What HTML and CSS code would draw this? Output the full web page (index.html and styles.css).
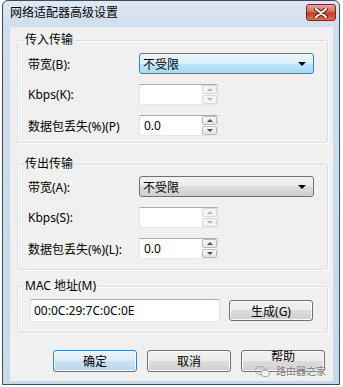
FILE: index.html
```html
<!DOCTYPE html>
<html lang="zh-CN">
<head>
    <meta charset="UTF-8" />
    <title>网络适配器高级设置</title>
    <link rel="stylesheet" href="styles.css">
</head>
<body>
    <div class="window">
        <div class="titlebar">
            <span class="title">网络适配器高级设置</span>
            <button class="close">
                <svg width="14" height="10" viewBox="0 0 14 10">
                    <path d="M2 1 L12 9 M12 1 L2 9" stroke="#5a1d14" stroke-width="4" stroke-linecap="round"/>
                    <path d="M2 1 L12 9 M12 1 L2 9" stroke="#ffffff" stroke-width="2.2" stroke-linecap="round"/>
                </svg>
            </button>
        </div>

        <div class="client">
            <fieldset class="group group-in">
                <legend>传入传输</legend>
                <div class="row">
                    <label>带宽(B):</label>
                    <div class="combo combo-hot"><span>不受限</span><i class="arrow"></i></div>
                </div>
                <div class="row">
                    <label>Kbps(K):</label>
                    <div class="spin spin-off">
                        <div class="spin-text"></div>
                        <div class="spin-btns"><span class="up"></span><span class="down"></span></div>
                    </div>
                </div>
                <div class="row">
                    <label>数据包丢失(%)(P)</label>
                    <div class="spin">
                        <div class="spin-text">0.0</div>
                        <div class="spin-btns"><span class="up"></span><span class="down"></span></div>
                    </div>
                </div>
            </fieldset>

            <fieldset class="group group-out">
                <legend>传出传输</legend>
                <div class="row">
                    <label>带宽(A):</label>
                    <div class="combo"><span>不受限</span><i class="arrow"></i></div>
                </div>
                <div class="row">
                    <label>Kbps(S):</label>
                    <div class="spin spin-off">
                        <div class="spin-text"></div>
                        <div class="spin-btns"><span class="up"></span><span class="down"></span></div>
                    </div>
                </div>
                <div class="row">
                    <label>数据包丢失(%)(L):</label>
                    <div class="spin">
                        <div class="spin-text">0.0</div>
                        <div class="spin-btns"><span class="up"></span><span class="down"></span></div>
                    </div>
                </div>
            </fieldset>

            <fieldset class="group group-mac">
                <legend>MAC 地址(M)</legend>
                <div class="mac-row">
                    <div class="mac-input">00:0C:29:7C:0C:0E</div>
                    <button class="btn">生成(G)</button>
                </div>
            </fieldset>

            <div class="actions">
                <button class="btn btn-default">确定</button>
                <button class="btn">取消</button>
                <button class="btn btn-help">帮助</button>
                <div class="watermark">
                    <svg width="15" height="13" viewBox="0 0 16 14">
                        <ellipse cx="6" cy="6" rx="5.5" ry="4.5" fill="none" stroke="#9a9a9a" stroke-width="1"/>
                        <ellipse cx="11" cy="9" rx="4.5" ry="3.6" fill="#f4f4f4" stroke="#9a9a9a" stroke-width="1"/>
                    </svg>
                    <span>路由器之家</span>
                </div>
            </div>
        </div>
    </div>
</body>
</html>
```

FILE: styles.css
```css
body {
    margin: 0;
    background-color: #ffffff;
    font-family: "Noto Sans", "Noto Sans CJK SC", sans-serif;
    font-size: 12px;
    color: #000000;
}
.window {
    margin-left: 2px;
    width: 338px;
    height: 385px;
    box-sizing: border-box;
    border: 1px solid #3e4b5b;
    border-radius: 6px 6px 0 0;
    background: linear-gradient(#dfe8f2, #d0dded 26px, #c9d9eb);
    padding: 0 6px 3px 7px;
    display: flex;
    flex-direction: column;
}
.titlebar {
    height: 26px;
    display: flex;
    justify-content: space-between;
    align-items: flex-start;
}
.title {
    margin-top: 4px;
    line-height: 16px;
    color: #000000;
}
.close {
    margin: 3px -3px 0 0;
    width: 30px;
    height: 17px;
    padding: 0;
    border: 1px solid #6b2b22;
    border-radius: 3px;
    background: linear-gradient(#eaa79b, #d8644f 48%, #c53b22 52%, #d4705a);
    display: flex;
    align-items: center;
    justify-content: center;
}
.client {
    flex: 1;
    background-color: #f0f0f0;
    padding: 5px 5px 0 7px;
    display: flex;
    flex-direction: column;
}
.group {
    margin: 0;
    padding: 5px 0 0 6px;
    border: 1px solid #d8e0e6;
    border-radius: 3px;
    box-shadow: inset 1px 1px 0 #ffffff, 1px 1px 0 #ffffff;
    min-width: 0;
}
.group legend {
    padding: 0 1px;
    line-height: 16px;
}
.group-in {
    padding-bottom: 6px;
}
.group-out {
    margin-top: 13px;
    padding-top: 4px;
    padding-bottom: 10px;
}
.group-mac {
    margin-top: 8px;
    padding-bottom: 10px;
}
.row {
    display: grid;
    grid-template-columns: 111px auto;
    align-items: center;
    padding-left: 4px;
    margin-bottom: 10px;
}
.row:last-child {
    margin-bottom: 0;
}
.combo {
    width: 175px;
    height: 21px;
    box-sizing: border-box;
    border: 1px solid #707070;
    border-radius: 3px;
    background: linear-gradient(#f2f2f2, #ebebeb 50%, #dddddd 50%, #cfcfcf);
    display: flex;
    align-items: center;
    justify-content: space-between;
    padding: 0 7px 0 3px;
}
.combo-hot {
    border-color: #3c7fb1;
    background: linear-gradient(#eaf6fd, #d9f0fc 50%, #bee6fd 50%, #a7d9f5);
}
.arrow {
    width: 0;
    height: 0;
    border-left: 4px solid transparent;
    border-right: 4px solid transparent;
    border-top: 4px solid #000000;
}
.spin {
    width: 79px;
    height: 21px;
    box-sizing: border-box;
    border: 1px solid #abadb3;
    border-color: #abadb3 #dbdfe6 #e3e9ef #e2e3ea;
    background-color: #ffffff;
    display: flex;
}
.spin-text {
    flex: 1;
    padding-left: 4px;
    line-height: 19px;
}
.spin-btns {
    width: 15px;
    display: flex;
    flex-direction: column;
    gap: 1px;
}
.spin-btns span {
    flex: 1;
    border: 1px solid #b9bbbf;
    border-radius: 2px;
    background: linear-gradient(#f8f8f8, #e4e4e4);
    display: flex;
    align-items: center;
    justify-content: center;
}
.spin-btns .up::after {
    content: "";
    border-left: 3px solid transparent;
    border-right: 3px solid transparent;
    border-bottom: 3px solid #4d4d4d;
}
.spin-btns .down::after {
    content: "";
    border-left: 3px solid transparent;
    border-right: 3px solid transparent;
    border-top: 3px solid #4d4d4d;
}
.spin-off .spin-btns span {
    border-color: #d6d6d6;
    background: #f4f4f4;
}
.spin-off .spin-btns .up::after {
    border-bottom-color: #b5b5b5;
}
.spin-off .spin-btns .down::after {
    border-top-color: #b5b5b5;
}
.mac-row {
    display: flex;
    align-items: center;
    gap: 9px;
    padding-left: 6px;
}
.mac-input {
    width: 190px;
    height: 23px;
    box-sizing: border-box;
    border: 1px solid #abadb3;
    border-color: #abadb3 #dbdfe6 #e3e9ef #e2e3ea;
    background-color: #ffffff;
    padding-left: 3px;
    line-height: 21px;
}
.btn {
    width: 84px;
    height: 21px;
    padding: 0;
    font-family: inherit;
    font-size: 12px;
    color: #000000;
    border: 1px solid #707070;
    border-radius: 3px;
    background: linear-gradient(#f2f2f2, #ebebeb 50%, #dddddd 50%, #cfcfcf);
    box-shadow: inset 0 0 0 1px #fcfcfc;
}
.btn-default {
    border-color: #3c7fb1;
    background: linear-gradient(#ecf5fb, #dcebf6 50%, #c9e1f2 50%, #b9d6ec);
}
.actions {
    position: relative;
    margin-top: 17px;
    display: flex;
    justify-content: flex-end;
    gap: 10px;
    padding-right: 3px;
}
.actions .btn {
    height: 22px;
}
.btn-help {
    line-height: 12px;
    padding-bottom: 9px;
}
.watermark {
    position: absolute;
    right: 2px;
    top: 15px;
    display: flex;
    align-items: center;
    gap: 6px;
    color: #7a7a7a;
    font-size: 10px;
    line-height: 11px;
    text-shadow: 0 0 2px #ffffff;
}
```
